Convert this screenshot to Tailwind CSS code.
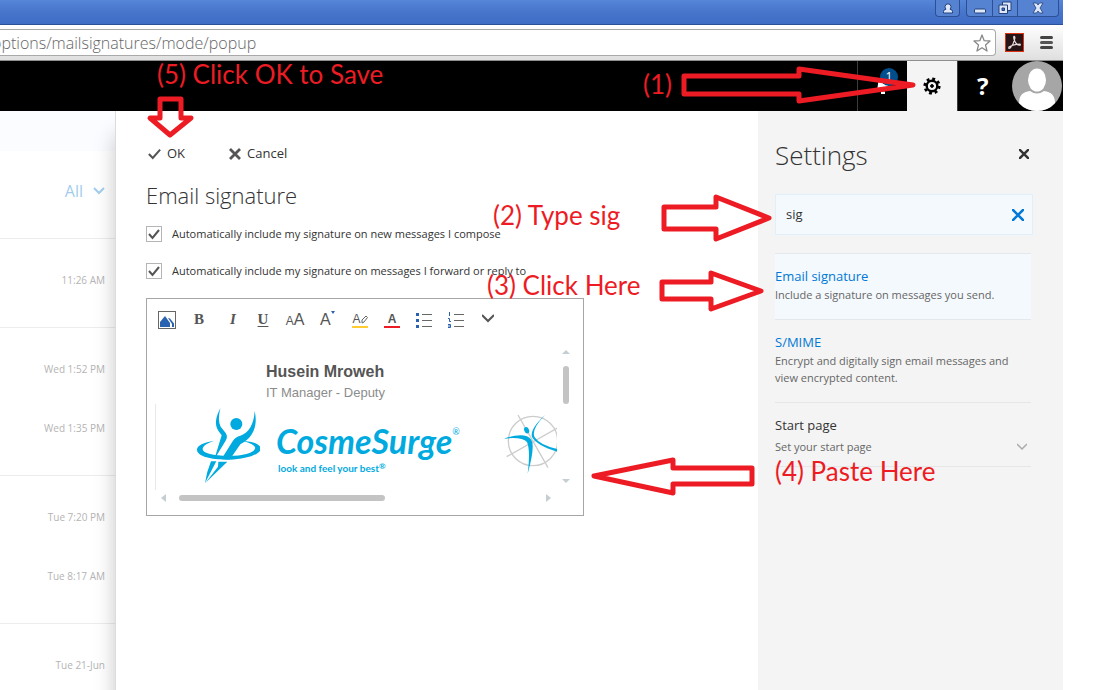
<!DOCTYPE html>
<html lang="en">
<head>
<meta charset="utf-8">
<title>Email signature</title>
<script src="https://cdn.jsdelivr.net/npm/@tailwindcss/browser@4"></script>
</head>
<body class="relative h-screen overflow-hidden bg-white font-['Open_Sans',sans-serif] text-[#333]">
<div class="mr-9 flex h-full flex-col">

  <!-- Window title bar -->
  <div class="flex h-[25px] shrink-0 items-start justify-end gap-1.5 border-b border-[#2c4f9c] bg-linear-to-b from-[#5586d8] via-[#4775cb] to-[#3f6dc6] pr-1">
    <button aria-label="Profile" class="flex h-[17px] w-[25px] items-center justify-center rounded-b-sm border border-t-0 border-[#2c4f96] bg-[#5583d2]">
      <svg class="h-[11px] w-3" viewBox="0 0 12 11" fill="#dfe8f8" stroke="#23407c"><path d="M1.500 10V8.500Q1.500 6.500 4 6.200Q3 5 3 3.500Q3.500.8 6 .8T9 3.500Q9 5 8 6.200q2.500.3 2.500 2.300V10z"/></svg>
    </button>
    <div class="flex h-[17px] divide-x divide-[#2c4f96] rounded-b-sm border border-t-0 border-[#2c4f96] bg-[#5583d2]">
      <button aria-label="Minimize" class="flex w-[26px] items-center justify-center"><svg class="h-3.5 w-3.5" viewBox="0 0 14 14"><rect x="1.500" y="8" width="11" height="4" rx="1" fill="#dfe8f8" stroke="#23407c"/></svg></button>
      <button aria-label="Restore" class="flex w-[25px] items-center justify-center"><svg class="h-3.5 w-3.5" viewBox="0 0 14 14" fill="#dfe8f8" stroke="#23407c"><path d="M4.500 1h8.500v8.500H4.500z"/><path d="M1 4h8.500v8.500H1z"/><path d="M4 7h2.500v2.500H4z" fill="#4775cb"/></svg></button>
      <button aria-label="Close window" class="flex w-10 items-center justify-center"><svg class="h-3 w-3" viewBox="0 0 12 12" fill="#dfe8f8" stroke="#23407c" stroke-width=".8"><path d="M1 1h3.500L6 3l1.500-2H11L8 6l3 5H7.500L6 9l-1.500 2H1l3-5z"/></svg></button>
    </div>
  </div>

  <!-- Address bar -->
  <div class="flex h-9 shrink-0 items-center border-b border-[#8f8f8f] bg-linear-to-b from-white to-[#dfdfdf]">
    <div class="flex h-[27px] flex-1 items-center overflow-hidden rounded-r-sm border border-l-0 border-[#a9a9a9] bg-white pr-1">
      <input aria-label="Address" value="options/mailsignatures/mode/popup" class="-ml-2 h-6 min-w-0 flex-1 text-base font-light text-[#666] outline-none">
      <svg class="h-5 w-[18px]" viewBox="0 0 18 18" fill="none" stroke="#888" stroke-width="1.300" stroke-linejoin="round"><path d="M9 1l2.200 5.700 5.800.3-4.500 3.900L14 17l-5-3.300L4 17l1.500-6.100L1 7l5.800-.3z"/></svg>
    </div>
    <div class="flex w-[67px] items-center gap-4 pl-[9px]">
      <svg class="h-[19px] w-[19px]" viewBox="0 0 19 19"><rect x=".5" y=".5" width="18" height="18" fill="#261416" stroke="#dd3112"/><path d="M8.500 3.500q1.800-.5 1.200 2.500-1 5-4.500 9-2 1-1.200-1Q8 11.500 15 11q1 1.500-1 1.200-4-1.200-5-6-.5-2.500-.2-2.700" fill="none" stroke="#e6dcdc" stroke-width="1.200"/></svg>
      <button aria-label="Menu" class="flex w-[13px] flex-col gap-0.5"><span class="h-[3px] w-full rounded-full bg-[#444]"></span><span class="h-[3px] w-full rounded-full bg-[#555]"></span><span class="h-[3px] w-full rounded-full bg-[#444]"></span></button>
    </div>
  </div>

  <!-- Application header -->
  <header class="z-10 flex h-[50px] shrink-0 justify-end bg-black">
    <button aria-label="Notifications" class="relative flex w-[50px] items-center justify-center border-l border-[#3c3c3c]">
      <svg class="h-5 w-4" viewBox="0 0 16 20" fill="#fff"><path d="M1 14q2-2 2-6 0-4 5-4t5 4q0 4 2 6zM6 15.500h4V18H6z"/></svg>
      <span class="absolute top-[7px] left-[22px] flex h-[18px] w-[18px] items-center justify-center rounded-full bg-[#004e8c] text-xs text-white">1</span>
    </button>
    <button aria-label="Settings" class="flex w-[50px] items-center justify-center bg-[#f4f4f4]">
      <svg class="h-[18px] w-[18px]" viewBox="0 0 18 18" fill="none" stroke="#000"><circle cx="9" cy="9" r="5.300" stroke-width="2.400"/><circle cx="9" cy="9" r="7.300" stroke-width="2.600" stroke-dasharray="2.900 2.833"/><circle cx="9" cy="9" r="1.400" fill="#000"/></svg>
    </button>
    <button aria-label="Help" class="flex w-[55px] items-center border-l border-[#3c3c3c] pl-[19px] font-['Noto_Sans'] text-2xl font-bold text-white">?</button>
    <svg class="w-[51px] pr-px" viewBox="0 0 50 50" role="img" aria-label="Account"><circle cx="25" cy="25" r="25" fill="#a6a6a6"/><ellipse cx="25" cy="19" rx="9" ry="11.500" fill="#fff"/><path d="M7 42q0-11 11-12 7 5 14 0 11 1 11 12-7 8-18 8T7 42" fill="#fff"/></svg>
  </header>

  <div class="flex min-h-0 flex-1">
    <!-- Dimmed message list -->
    <aside class="w-[115px] shrink-0 text-right text-[10px] leading-6 text-[#b4b4b4]">
      <div class="h-10 bg-[#fbfcff]"></div>
      <div class="flex h-[88px] items-center justify-end gap-2.5 border-b border-[#ececec] pr-2.5 pb-2 text-base text-[#a3cdee]">All
        <svg class="h-3 w-3" viewBox="0 0 12 12" fill="none" stroke="#a3cdee" stroke-width="2"><path d="M1 3l5 5 5-5"/></svg>
      </div>
      <ul class="border-b border-[#ececec] pt-[29px] pr-2.5"><li class="h-[59px]">11:26 AM</li></ul>
      <ul class="border-b border-[#ececec] pt-[29px] pr-2.5"><li class="h-[59px]">Wed 1:52 PM</li><li class="h-[59px]">Wed 1:35 PM</li></ul>
      <ul class="border-b border-[#ececec] pt-[29px] pr-2.5"><li class="h-[59px]">Tue 7:20 PM</li><li class="h-[59px]">Tue 8:17 AM</li></ul>
      <ul class="pt-[29px] pr-2.5"><li>Tue 21-Jun</li></ul>
    </aside>

    <!-- Signature form -->
    <main class="min-w-0 flex-1 border-l border-[#dcdcdc] bg-white pt-8 pl-[30px] shadow-[0_24px_20px_rgba(0,0,0,0.22)]">
      <div class="flex h-[22px] items-center gap-11 pl-0.5 text-[13px]">
        <button class="flex items-center gap-1.5"><svg class="h-3 w-[13px]" viewBox="0 0 15 12" fill="none" stroke="#555" stroke-width="2.400"><path d="M1 6l4.500 4.500L14 1"/></svg>OK</button>
        <button class="flex items-center gap-1.5"><svg class="h-3 w-3" viewBox="0 0 12 12" fill="none" stroke="#555" stroke-width="2.800"><path d="M1 1l10 10M11 1L1 11"/></svg>Cancel</button>
      </div>
      <h1 class="mt-3 text-[22px] leading-9 font-light">Email signature</h1>
      <label class="mt-2.5 flex h-[22px] items-center gap-2.5 text-[11px] whitespace-nowrap"><span class="grid h-4 w-4 place-items-center"><input type="checkbox" checked class="col-start-1 row-start-1 h-4 w-4 appearance-none border border-[#b5b5b5]"><svg class="pointer-events-none col-start-1 row-start-1 h-3 w-3" viewBox="0 0 12 12" fill="none" stroke="#555" stroke-width="2"><path d="M1 6l3.500 4L11 2"/></svg></span>Automatically include my signature on new messages I compose</label>
      <label class="mt-[15px] flex h-[22px] items-center gap-2.5 text-[11px] whitespace-nowrap"><span class="grid h-4 w-4 place-items-center"><input type="checkbox" checked class="col-start-1 row-start-1 h-4 w-4 appearance-none border border-[#b5b5b5]"><svg class="pointer-events-none col-start-1 row-start-1 h-3 w-3" viewBox="0 0 12 12" fill="none" stroke="#555" stroke-width="2"><path d="M1 6l3.500 4L11 2"/></svg></span>Automatically include my signature on messages I forward or reply to</label>

      <section aria-label="Signature editor" class="mt-4 flex h-[218px] w-[438px] flex-col border border-[#a6a6a6]">
        <div class="flex h-[41px] items-center gap-4 pl-[11px] font-['Liberation_Serif'] text-[15px] font-bold text-[#555]">
          <button aria-label="Insert picture"><svg class="h-[18px] w-[18px]" viewBox="0 0 18 18"><rect x=".5" y=".5" width="17" height="17" fill="#fff" stroke="#666"/><path d="M2 16v-5l5-6 5 7v4z" fill="#2a62b2"/><path d="M10 7l2 .5 4 5V16h-2v-3z" fill="#2a62b2"/></svg></button>
          <button aria-label="Bold" class="w-[14px]">B</button>
          <button aria-label="Italic" class="ml-1 w-[14px] italic">I</button>
          <button aria-label="Underline" class="w-[14px] underline underline-offset-2">U</button>
          <button aria-label="Font" class="flex w-[18px] items-baseline justify-center font-['Liberation_Sans'] text-base font-normal"><span class="text-xs">A</span>A</button>
          <button aria-label="Font size" class="flex w-4 font-['Liberation_Sans'] text-base font-normal">A<svg class="mt-[3px] h-[3px] w-1" viewBox="0 0 4 3"><path d="M0 0h4L2 3z" fill="#2a62b2"/></svg></button>
          <button aria-label="Highlight" class="flex h-4 w-4 items-center justify-center border-b-2 border-[#fc3] font-['Liberation_Sans'] text-xs font-normal">A<svg class="h-2.5 w-[7px]" viewBox="0 0 7 10" fill="none" stroke="#666"><path d="M1 9V6l4-4 1.500 1.500L3 8z"/></svg></button>
          <button aria-label="Font color" class="h-4 w-4 border-b-2 border-[#ed1c24] font-['Liberation_Sans'] text-xs leading-3 font-bold">A</button>
          <button aria-label="Bullets"><svg class="h-4 w-4" viewBox="0 0 16 16"><path d="M6 2.500h10M6 8.500h10M6 14.500h10" stroke="#666"/><path d="M0 1h3v3H0zM0 7h3v3H0zM0 13h3v3H0z" fill="#2a62b2"/></svg></button>
          <button aria-label="Numbering"><svg class="h-4 w-4" viewBox="0 0 16 16" fill="none"><path d="M6 2.500h10M6 8.500h10M6 14.500h10" stroke="#666"/><path d="M1.500 0v4M0 6.500h1.500v3H3M0 12.500h2.500v3H0M0 14h2" stroke="#2a62b2"/></svg></button>
          <button aria-label="More formatting" class="ml-0.5"><svg class="-mt-1 h-3 w-3" viewBox="0 0 12 12" fill="none" stroke="#555" stroke-width="2"><path d="M0 3l6 6 6-6"/></svg></button>
        </div>
        <div class="flex h-[150px] pr-2">
          <div class="ml-2 min-w-0 flex-1 overflow-hidden pt-5 font-['Liberation_Sans'] whitespace-nowrap">
            <p class="pl-[111px] text-base leading-6 font-bold text-[#555]">Husein Mroweh</p>
            <p class="pl-[111px] text-[13px] leading-[18px] text-[#8c8c8c]">IT Manager - Deputy</p>
            <div class="mt-0.5 flex h-[88px] items-start border-l border-[#e8e8e8]">
              <svg class="mt-[-4px] ml-[29px] h-[90px] w-[75px] shrink-0" viewBox="0 0 225 270" fill="#00aadf">
                <circle cx="154" cy="72" r="18"/>
                <path d="M106 25C94 48 86 72 101 94L110 106 88 178 121 124Q130 110 122 99L107 80Q97 62 106 25"/>
                <path d="M209 33C207 70 194 97 166 107Q151 110 143 124L109 178H135L166 133C202 115 220 80 209 33"/>
                <path d="M88 122C55 127 34 137 36 151 40 171 83 180 132 179 185 178 226 163 227 146 227 133 203 124 172 122 200 130 213 137 210 146 204 160 174 167 131 168 84 167 54 160 53 148 53 137 65 130 88 122"/>
                <path d="M78 184L94 184 60 249Q65 215 78 184M100 185H127L61 249 99 200z"/>
              </svg>
              <div class="mt-4 ml-4 text-[#00aadf]">
                <p class="flex font-['Lato'] text-[34px] leading-[42px] font-bold italic">CosmeSurge<span class="text-[9px] leading-6 font-normal not-italic">®</span></p>
                <p class="flex pl-0.5 font-['Lato'] text-[10px] leading-3 font-bold">look and feel your best<span class="text-[8px] leading-2">®</span></p>
              </div>
              <svg class="mt-[-4px] ml-auto h-[90px] w-[57px] shrink-0" viewBox="30 0 171 270" fill="none">
                <g stroke="#ccc" stroke-width="4"><circle cx="129" cy="123" r="74"/><path d="M84 45L174 203M50 170L202 84"/></g>
                <ellipse cx="110" cy="91" rx="7" ry="10" fill="#00aadf" transform="rotate(-25 110 91)"/>
                <path d="M42 116Q105 94 124 119 136 139 113 221 122 153 111 126 96 110 42 116M165 45Q122 90 134 112 149 135 201 147V155Q141 137 126 111 119 88 165 45" fill="#00aadf"/>
              </svg>
            </div>
          </div>
          <div class="flex w-[18px] flex-col items-center pt-2.5 pb-[3px]">
            <svg class="h-1 w-2" viewBox="0 0 8 4"><path d="M0 4h8L4 0z" fill="#c5ced3"/></svg>
            <span class="mt-3 h-[38px] w-1.5 rounded-full bg-[#c4c4c4]"></span>
            <svg class="mt-auto mb-1 h-1 w-2" viewBox="0 0 8 4"><path d="M0 0h8L4 4z" fill="#c5ced3"/></svg>
          </div>
        </div>
        <div class="flex h-4 items-center pr-8 pl-3.5">
          <svg class="h-2 w-[5px]" viewBox="0 0 5 8"><path d="M5 0v8L0 4z" fill="#c5ced3"/></svg>
          <span class="ml-[13px] h-1.5 w-[206px] rounded-full bg-[#c4c4c4]"></span>
          <svg class="ml-auto h-2 w-[5px]" viewBox="0 0 5 8"><path d="M0 0v8l5-4z" fill="#c5ced3"/></svg>
        </div>
      </section>
    </main>

    <!-- Settings pane -->
    <aside class="z-[1] w-[305px] shrink-0 bg-[#f4f4f4] pr-8 pl-[17px] text-[#666]">
      <div class="flex h-[83px] items-center justify-between pt-1.5 pr-0.5">
        <h2 class="text-[26px] font-light text-[#333]">Settings</h2>
        <button aria-label="Close" class="pb-1"><svg class="h-2.5 w-2.5" viewBox="0 0 10 10" stroke="#333" stroke-width="2.400"><path d="M0 0l10 10M10 0L0 10"/></svg></button>
      </div>
      <div class="-mr-0.5 flex h-[41px] items-center border border-[#e0effa] bg-[#f4f9fd] pr-2 pl-2.5">
        <input aria-label="Search settings" value="sig" class="min-w-0 flex-1 text-[13px] text-[#333] outline-none">
        <button aria-label="Clear search"><svg class="h-3 w-3" viewBox="0 0 12 12" stroke="#0078d7" stroke-width="2.600"><path d="M0 0l12 12M12 0L0 12"/></svg></button>
      </div>
      <section class="mt-[18px] h-[67px] border-y border-[#e4e8ec] bg-[#f4f9fd] pt-3 text-[11px] leading-[17px]">
        <a href="#" class="block text-[13px] leading-5 text-[#0078d7]">Email signature</a>
        <p class="whitespace-nowrap">Include a signature on messages you send.</p>
      </section>
      <section class="h-[83px] border-b border-[#e6e6e6] pt-3 text-[11px] leading-[17px]">
        <a href="#" class="block text-[13px] leading-5 text-[#0078d7]">S/MIME</a>
        <p class="whitespace-nowrap">Encrypt and digitally sign email messages and<br>view encrypted content.</p>
      </section>
      <section class="h-16 border-b border-[#e6e6e6] pt-3 text-[11px] leading-6">
        <h3 class="text-[13px] leading-5 text-[#333]">Start page</h3>
        <button class="flex w-full items-center justify-between pr-1">Set your start page<svg class="h-2.5 w-2.5" viewBox="0 0 10 10" fill="none" stroke="#aaa" stroke-width="1.500"><path d="M0 2l5 5 5-5"/></svg></button>
      </section>
    </aside>
  </div>
</div>

<!-- Step annotations drawn over the window -->
<div class="pointer-events-none absolute inset-0 z-20 font-['Lato'] text-[26px] leading-8 whitespace-nowrap text-[#ed1c24]">
  <svg class="absolute top-0 left-0 h-[690px] w-[1099px]" viewBox="0 0 1099 690" fill="none" stroke="#ed1c24" stroke-width="5" stroke-linejoin="round">
    <path d="M684 76H799V69L913 85 799 101V94H684z"/>
    <path d="M664 207H716V197L769 218 716 239V229H664z"/>
    <path d="M662 282H711V273L761 291 711 309V299H662z"/>
    <path d="M752 468H673V460L594 476 673 493V484H752z"/>
    <path d="M160 99H181V118H191L170 135 150 118H160z"/>
  </svg>
  <span class="absolute top-[58px] left-[157px]">(5) Click OK to Save</span>
  <span class="absolute top-[68px] left-[643px]">(1)</span>
  <span class="absolute top-[199px] left-[493px]">(2) Type sig</span>
  <span class="absolute top-[269px] left-[487px]">(3) Click Here</span>
  <span class="absolute top-[455px] left-[775px]">(4) Paste Here</span>
</div>
</body>
</html>
